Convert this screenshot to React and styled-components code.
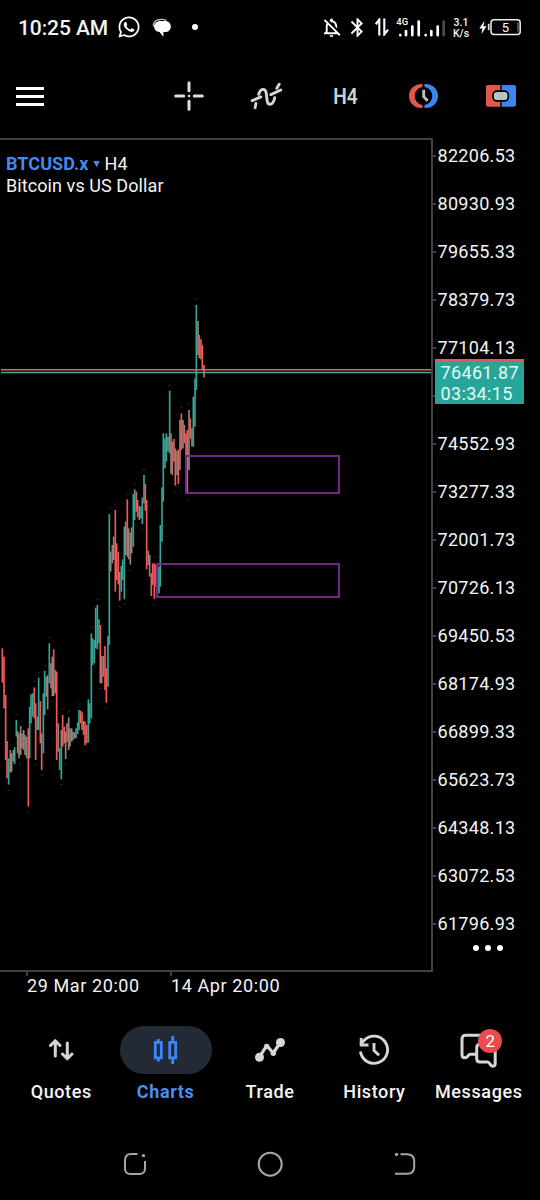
import React from "react";
import styled, { createGlobalStyle } from "styled-components";
import { FaWhatsapp } from "react-icons/fa";
import { MdOutlineNotificationsOff, MdBluetooth } from "react-icons/md";

const GlobalStyle = createGlobalStyle`
  * { box-sizing: border-box; }
  body { margin: 0; background: #000; }
`;

const Screen = styled.div`
  display: flex;
  flex-direction: column;
  width: 540px;
  height: 1200px;
  overflow: hidden;
  background: #000;
  color: #f4f4f4;
  font-family: Roboto, "Liberation Sans", sans-serif;
  svg { display: block; flex: none; }
`;

const StatusBar = styled.header`
  display: flex;
  align-items: center;
  height: 54px;
  padding: 0 18px 0 18px;
`;

const Clock = styled.span`
  width: 99px;
  padding-top: 1px;
  font-size: 21px;
  font-weight: 500;
  letter-spacing: -0.1px;
  white-space: nowrap;
`;

const StatusIcons = styled.div`
  display: flex;
  align-items: center;
  margin-left: auto;
`;

const NetSpeed = styled.div`
  width: 20px;
  margin: 1px 8px 0 5px;
  font-size: 10.5px;
  font-weight: 500;
  line-height: 11px;
  text-align: center;
`;

const Toolbar = styled.nav`
  display: flex;
  align-items: center;
  height: 84px;
  padding-left: 16px;
`;

const MenuButton = styled.div`
  display: flex;
  flex-direction: column;
  gap: 5px;
  width: 28px;
  margin-right: auto;
`;

const MenuLine = styled.span`
  height: 3px;
  background: #fff;
`;

const ToolButton = styled.div`
  display: flex;
  justify-content: center;
  width: 78px;
`;

const Timeframe = styled.span`
  color: #cfcfcf;
  font-size: 22.5px;
  font-weight: 600;
  line-height: 26px;
  transform: scaleX(0.85);
`;

const ChartArea = styled.main`
  position: relative;
  display: flex;
  height: 834px;
`;

const Plot = styled.section`
  width: 433px;
  height: 834px;
  border: solid #414146;
  border-width: 2px 2px 2px 0;
`;

const SymbolTitle = styled.div`
  position: absolute;
  left: 6px;
  top: 14.5px;
  font-size: 18px;
  line-height: 22px;
  letter-spacing: 0.08px;
  white-space: nowrap;
`;

const SymbolRow = styled.div`
  display: flex;
  align-items: center;
`;

const SymbolName = styled.strong`
  color: #4689ee;
  font-weight: 700;
`;

const PriceAxis = styled.aside`
  flex: 1;
  margin-top: -6.5px;
`;

const PriceLabel = styled.div`
  display: flex;
  align-items: center;
  height: 48px;
  gap: 1.5px;
  font-size: 18px;
  letter-spacing: 0.3px;
  &::before {
    content: "";
    width: 3px;
    height: 2px;
    background: #414146;
  }
`;

const PriceTag = styled.div`
  position: absolute;
  left: 435px;
  top: 221px;
  width: 89px;
  height: 45px;
  padding: 0 0 0 5.500px;
  border-top: 3px solid #e8555a;
  background: #26a69a;
  color: #e9f8f5;
  font-size: 18px;
  line-height: 21px;
  letter-spacing: 0.35px;
`;

const MoreButton = styled.div`
  display: flex;
  gap: 6px;
  margin: -2.500px 0 0 40px;
`;

const MoreDot = styled.i`
  width: 6px;
  height: 6px;
  border-radius: 50%;
  background: #fff;
`;

const TimeAxis = styled.div`
  display: flex;
  height: 48px;
  padding-left: 26px;
`;

const TimeLabel = styled.div`
  width: 144px;
  padding-left: 1px;
  font-size: 18px;
  letter-spacing: 0.6px;
  line-height: 20px;
  white-space: nowrap;
  &::before {
    content: "";
    display: block;
    width: 2px;
    height: 4px;
    margin-left: -1px;
    background: #414146;
  }
`;

const TabBar = styled.nav`
  display: grid;
  grid-template-columns: repeat(5, 1fr);
  height: 108px;
  padding: 6px 9px 0;
`;

const Tab = styled.div`
  display: flex;
  flex-direction: column;
  align-items: center;
  gap: 8px;
  color: ${(p) => (p.$active ? "#4a8ff0" : "#f5f5f5")};
  font-size: 18px;
  font-weight: ${(p) => (p.$active ? 700 : 500)};
  line-height: 20px;
  letter-spacing: 0.6px;
  white-space: nowrap;
`;

const TabPill = styled.div`
  position: relative;
  display: flex;
  align-items: center;
  justify-content: center;
  width: 92px;
  height: 48px;
  border-radius: 24px;
  background: ${(p) => (p.$active ? "#222a35" : "transparent")};
`;

const Badge = styled.span`
  position: absolute;
  left: 45.5px;
  top: 3px;
  width: 24px;
  height: 24px;
  border-radius: 50%;
  background: #eb4b4f;
  color: #fff;
  font-size: 17px;
  font-weight: 400;
  line-height: 24px;
  letter-spacing: 0;
  text-align: center;
`;

const SystemNav = styled.footer`
  display: flex;
  align-items: center;
  justify-content: center;
  gap: 108px;
  height: 72px;
`;

const TEAL = "#35a597";
const RED = "#ee5b58";
const MIXED = "#98827a";
const COLORS = { g: TEAL, r: RED, n: MIXED };

/* Bars are stored per swing as "color x high low", in thirds of a pixel. */
const SWINGS = [
  {
    dx: 0,
    dy: 1680,
    bars:
      "r 7 265 368,r 12 290 445,r 17 405 600,r 21 543 655,g 26 595 674,n 31 570 638,n 35 580 635,n 40 570 605,g 44 562 612,g 49 480 530,r 53 513 580,n 57 520 595,n 62 498 585,n 66 520 565,n 71 510 570,n 75 525 585,n 80 530 595,r 85 505 740,g 89 440 595,g 93 403 490,g 98 400 470,r 103 382 475,r 107 430 600,n 112 470 510,g 116 353 510,r 121 423 550,r 125 520 630,g 130 400 580,g 134 332 465,n 139 350 410,n 143 345 448,g 148 250 370,n 153 310 385,n 157 290 408,r 161 268 408,n 166 330 400,r 170 335 600,n 175 490 575,g 179 565 630,g 184 510 658,r 188 465 560,r 193 500 550,n 197 515 597,n 201 490 545,n 206 472 570,n 210 505 560,n 215 505 545,n 219 515 540,n 224 518 535,g 228 505 535,g 233 487 522,g 237 450 510,r 242 452 490,r 246 457 510,r 251 483 525,r 255 485 556,r 260 495 550,g 265 418 548,g 269 430 490,g 274 220 475,g 278 235 315,g 283 240 310,g 287 143 265,g 292 135 268,g 297 178 250,r 301 195 370,n 305 288 370,n 310 288 350,r 315 258 390,r 319 325 428,g 324 228 380",
    marks:
      "150 233,26 692,104 364,50 463,63 483,85 757,184 674,190 447,207 454,256 573,276 202,293 118,320 445,126 645,108 615,117 338,135 317,157 424,238 432,302 386,197 611,59 611",
  },
  {
    dx: 270,
    dy: 1320,
    bars:
      "g 58 222 615,n 62 335 395,n 67 315 370,n 71 290 360,r 76 210 455,r 80 310 420,r 85 335 433,r 89 395 482,g 94 378 455,g 98 358 420,g 103 260 478,n 107 245 345,r 112 178 350,n 116 265 358,n 121 278 374,n 125 262 340,g 130 162 320,g 134 148 240,r 139 155 215,r 143 180 232,r 148 198 240,g 153 200 235,g 157 173 252,g 162 105 190,r 166 132 212,r 170 180 388,n 175 332 375,n 179 345 410,r 184 400 468,r 188 370 435,r 193 370 477,r 198 375 440,n 202 372 455,g 207 380 460,g 211 255 440,g 216 142 305",
    marks:
      "162 90,135 130,112 162,76 192,58 203,89 500,103 492,157 268,193 494,121 391,32 745,193 352",
  },
  {
    dx: 420,
    dy: 870,
    bars:
      "g 70 430 635,g 75 445 535,g 79 430 515,n 84 440 485,g 89 302 490,n 93 430 550,n 97 455 555,r 102 447 515,r 106 475 587,n 111 483 555,r 115 478 582,n 120 390 540,r 124 370 480,n 129 390 475,r 133 405 460,r 138 430 500,r 142 420 608,n 147 360 540,r 151 385 445,n 156 415 470,g 160 320 470,g 165 265 410,g 169 45 300,n 174 93 195,r 178 135 205,r 183 148 208,r 187 165 240,r 192 225 262",
    marks: "169 28,88 286,124 352,147 343,106 604,143 630,12 539",
  },
];

const ZONES = [
  { x: 186, y: 456, w: 153, h: 37 },
  { x: 157, y: 564, w: 182, h: 33 },
];

/* The empty slot is the tick that sits behind the current price tag. */
const PRICES = [
  "82206.53", "80930.93", "79655.33", "78379.73", "77104.13", "",
  "74552.93", "73277.33", "72001.73", "70726.13", "69450.53", "68174.93",
  "66899.33", "65623.73", "64348.13", "63072.53", "61796.93",
];

function PriceChart() {
  return (
    <svg width="431" height="830" viewBox="0 140 431 830">
      <g transform="scale(0.33333)">
        {SWINGS.map((s) => (
          <g key={s.dx} transform={`translate(${s.dx} ${s.dy})`}>
            {s.bars.split(",").map((bar) => {
              const [c, x, top, bottom] = bar.split(" ");
              return (
                <rect key={x} x={x - 2.5} y={top} width="5" height={bottom - top} fill={COLORS[c]} />
              );
            })}
            {s.marks.split(",").map((m) => {
              const [x, y] = m.split(" ");
              return <rect key={m} x={x - 4} y={y - 1.5} width="8" height="3" fill="#2b2433" />;
            })}
          </g>
        ))}
      </g>
      {ZONES.map((z) => (
        <rect key={z.y} x={z.x} y={z.y} width={z.w} height={z.h} fill="none" stroke="#722784" strokeWidth="2" />
      ))}
      <path d="M1 369.7H431" stroke="#e8615f" strokeWidth="1.6" />
      <path d="M1 372.6H431" stroke="#43aa9d" strokeWidth="1.5" />
    </svg>
  );
}

function MessageBubble() {
  return (
    <svg width="20" height="20" viewBox="0 0 20 20">
      <path d="M1.600 8.500C.7 5 3.300 1.700 8 1.500c3-.2 5 .1 6.500 1.100" fill="none" stroke="#bbb" strokeWidth="1.300" />
      <path d="M8.500 3h4.300c3.400 0 6 2.200 6 5.500 0 3.400-2.300 5.600-5.700 5.600h-1.700V18.700L7.500 14.100C4.300 13.800 2.100 11.500 2.100 8.600 2.100 5.300 4.900 3 8.500 3Z" fill="#fff" />
    </svg>
  );
}

function DataArrows() {
  return (
    <svg width="14" height="18" viewBox="0 0 14 18" fill="none" stroke="#fff" strokeWidth="2.100">
      <path d="M4.300 17.500V1.500L.8 6.300M9.300.5v16L13 11.700" />
    </svg>
  );
}

function Signal() {
  return (
    <svg width="50" height="24" viewBox="394 14.500 50 24">
      <text x="394.300" y="24" fill="#fff" fontSize="9.500" fontWeight="500">4G</text>
      <g stroke="#fff" strokeWidth="2.700" strokeLinecap="round">
        <path d="M398.300 34.500v.2M404 30.500v4.200M410.300 26v8.700M416.700 21v13.700M423.700 34.500v.2M429.300 30.500v4.200M435.700 26v8.700" />
        <path d="M441.700 21v13.700" stroke="#4c4c4c" />
      </g>
    </svg>
  );
}

function Battery() {
  return (
    <svg width="43" height="18" viewBox="479 18 43 18">
      <path d="M484.500 20.800 479.300 28.500h3.200l-1.200 5.700 5.300-8h-3.200Z" fill="#fff" />
      <path d="M488.700 23.800v6.400" stroke="#ddd" strokeWidth="1.700" />
      <rect x="491" y="19.800" width="29.200" height="14.600" rx="3" fill="none" stroke="#eee" strokeWidth="1.500" />
      <path d="M518 22.500v9" stroke="#666" strokeWidth="1.500" />
      <text x="505.500" y="31.700" fill="#fff" fontSize="13" textAnchor="middle">5</text>
    </svg>
  );
}

function CrosshairIcon() {
  return (
    <svg width="30" height="30" viewBox="0 0 30 30" fill="none" stroke="#dedede" strokeWidth="3" strokeLinecap="round">
      <path d="M15 1.700v8M15 20.300v8M1.700 15h8M20.300 15h8" />
      <circle cx="15" cy="15" r="1.300" fill="#dedede" stroke="none" />
    </svg>
  );
}

function IndicatorIcon() {
  return (
    <svg width="34" height="30" viewBox="250 81 34 30" fill="none" stroke="#d6d6d6" strokeWidth="2.900" strokeLinecap="round" strokeLinejoin="round">
      <path d="M255.100 107.700l.8-4.200M258.700 94.300C259.700 91 261.300 89.400 263.300 89.400 268.700 89.400 264.800 104.300 269.800 104.300 272.300 104.300 274 101.300 274.700 97.700M276.800 88.300l2.400-4" />
      <path d="M252.200 100.600l8.600-3.700M270.800 94.600l10-4.600" />
    </svg>
  );
}

function SessionIcon() {
  return (
    <svg width="31" height="26" viewBox="0 0 31 26">
      <path d="M14.500 1H13A12 12 0 0 0 13 25h1.500v-2.900A9.200 9.200 0 0 1 14.500 3.900Z" fill="#e1574c" />
      <path d="M16.500 1H18A12 12 0 0 1 18 25h-1.500v-2.900A9.200 9.200 0 0 0 16.500 3.900Z" fill="#3b87f0" />
      <path d="M15.700 6.700v7l4 4" fill="none" stroke="#b9c3c9" strokeWidth="2.800" />
    </svg>
  );
}

function OneClickIcon() {
  return (
    <svg width="30" height="24" viewBox="0 0 30 24">
      <path d="M14.300 1H2a2 2 0 0 0-2 2v17.700a2 2 0 0 0 2 2h12.300Z" fill="#e1574c" />
      <path d="M15.700 1H28a2 2 0 0 1 2 2v17.700a2 2 0 0 1-2 2H15.700Z" fill="#3b87f0" />
      <rect x="7" y="7.200" width="15.300" height="9.700" rx="3.800" fill="#b7c7c8" stroke="#000" strokeWidth="1.700" />
    </svg>
  );
}

function QuotesIcon() {
  return (
    <svg width="26" height="24" viewBox="0 0 26 24" fill="none" stroke="#d4d4d4" strokeWidth="3" strokeLinecap="round" strokeLinejoin="round">
      <path d="M7.300 18V3M2.500 7.500 7.300 2.700 12 7.500M19.300 5v15.500M14.500 16l4.800 4.800L24 16" />
    </svg>
  );
}

function ChartsIcon() {
  return (
    <svg width="26" height="30" viewBox="0 0 26 30" fill="none" stroke="#3f86f4" strokeWidth="2.800">
      <path d="M2.300 7.300h6v15.500h-6zM16.700 7.300h6v15.500h-6zM5.300 4v3.500M5.300 22.500v4M19.700 1v6.500M19.700 22.500V29" />
    </svg>
  );
}

function TradeIcon() {
  return (
    <svg width="34" height="30" viewBox="253 1035 34 30" fill="none" stroke="#d6d6d6" strokeWidth="3.200" strokeLinejoin="round">
      <path d="M259.300 1057.300 266.700 1045.500 273.300 1053 280.300 1042.500" />
      <circle cx="259.500" cy="1057.300" r="4.500" fill="#d6d6d6" stroke="none" />
      <circle cx="280.500" cy="1042.500" r="4.500" fill="#d6d6d6" stroke="none" />
      <circle cx="266.700" cy="1046.500" r="2.700" fill="#d6d6d6" stroke="none" />
      <circle cx="273.300" cy="1053.200" r="2.700" fill="#d6d6d6" stroke="none" />
    </svg>
  );
}

function HistoryIcon() {
  return (
    <svg width="32" height="32" viewBox="358 1034 32 32" fill="none" stroke="#d6d6d6" strokeWidth="2.900">
      <path d="M360.500 1051.500A13.600 13.600 0 1 0 364 1040.500L360.500 1044.500" />
      <path d="M361.200 1038v7h7.300" />
      <path d="M374 1043v7.500l5 4.800" />
    </svg>
  );
}

function MessagesIcon() {
  return (
    <svg width="38" height="36" viewBox="460 1032 38 36" fill="none" stroke="#d6d6d6" strokeWidth="3" strokeLinejoin="round">
      <path d="M476 1054.300h-6c-1.500 0-2.500 3.500-5 3.500-2 0-3-1.200-3-3v-16c0-2 1.500-3.500 3.500-3.500h22" />
      <path d="M495.200 1048v15.500c0 3-3 3.500-4.500 1.500-1.200-1.700-1.700-3-3.200-3h-7.500c-2 0-3.300-1.300-3.300-3.300v-11c0-2 1.300-3.700 3.500-3.700" />
    </svg>
  );
}

function SystemIcon({ children }) {
  return (
    <svg width="27" height="27" viewBox="0 0 27 27" fill="none" stroke="#a5a5a5" strokeWidth="2">
      {children}
    </svg>
  );
}

const TABS = [
  { label: "Quotes", Icon: QuotesIcon },
  { label: "Charts", Icon: ChartsIcon, active: true },
  { label: "Trade", Icon: TradeIcon },
  { label: "History", Icon: HistoryIcon },
  { label: "Messages", Icon: MessagesIcon, badge: 2 },
];

const BubbleSlot = styled.div`
  margin: 1px 20px 0 11px;
`;

const NotificationDot = styled.i`
  width: 6px;
  height: 6px;
  border-radius: 50%;
  background: #fff;
`;

const IconSlot = styled.div`
  margin-right: ${(p) => p.$gap}px;
`;

export default function App() {
  return (
    <Screen>
      <GlobalStyle />
      <StatusBar>
        <Clock>10:25 AM</Clock>
        <FaWhatsapp size={24} color="#fff" />
        <BubbleSlot><MessageBubble /></BubbleSlot>
        <NotificationDot />
        <StatusIcons>
          <IconSlot $gap={3}><MdOutlineNotificationsOff size={23} color="#fff" /></IconSlot>
          <IconSlot $gap={6}><MdBluetooth size={23} color="#fff" /></IconSlot>
          <IconSlot $gap={7}><DataArrows /></IconSlot>
          <Signal />
          <NetSpeed>3.1<br />K/s</NetSpeed>
          <Battery />
        </StatusIcons>
      </StatusBar>

      <Toolbar>
        <MenuButton><MenuLine /><MenuLine /><MenuLine /></MenuButton>
        <ToolButton><CrosshairIcon /></ToolButton>
        <ToolButton><IndicatorIcon /></ToolButton>
        <ToolButton><Timeframe>H4</Timeframe></ToolButton>
        <ToolButton><SessionIcon /></ToolButton>
        <ToolButton><OneClickIcon /></ToolButton>
      </Toolbar>

      <ChartArea>
        <Plot><PriceChart /></Plot>
        <SymbolTitle>
          <SymbolRow>
            <SymbolName>BTCUSD.x</SymbolName>
            <svg width="16" height="8" viewBox="0 0 16 8"><path d="M4.300 1h6.500L7.600 7.300Z" fill="#4689ee" /></svg>
            <span>H4</span>
          </SymbolRow>
          <div>Bitcoin vs US Dollar</div>
        </SymbolTitle>
        <PriceAxis>
          {PRICES.map((p, i) => <PriceLabel key={i}>{p}</PriceLabel>)}
          <MoreButton><MoreDot /><MoreDot /><MoreDot /></MoreButton>
        </PriceAxis>
        <PriceTag>76461.87<br />03:34:15</PriceTag>
      </ChartArea>

      <TimeAxis>
        <TimeLabel>29 Mar 20:00</TimeLabel>
        <TimeLabel>14 Apr 20:00</TimeLabel>
      </TimeAxis>

      <TabBar>
        {TABS.map(({ label, Icon, active, badge }) => (
          <Tab key={label} $active={active}>
            <TabPill $active={active}>
              <Icon />
              {badge && <Badge>{badge}</Badge>}
            </TabPill>
            {label}
          </Tab>
        ))}
      </TabBar>

      <SystemNav>
        <SystemIcon>
          <path d="M15.500 3H9C5 3 3 5.500 3 9.500V17.500c0 3.500 2 5.500 5.500 5.500H17.500c3.500 0 5.500-2 5.500-5.500v-7.500" />
          <circle cx="21.500" cy="4.600" r="1.700" fill="#a5a5a5" stroke="none" />
        </SystemIcon>
        <SystemIcon><circle cx="13.200" cy="13.200" r="11.500" /></SystemIcon>
        <SystemIcon>
          <path d="M8.500 3.200H15c5 0 7.200 2.500 7.200 7V15.700c0 5-2.500 7-7 7H3" />
          <circle cx="4.500" cy="3.400" r="1.700" fill="#a5a5a5" stroke="none" />
        </SystemIcon>
      </SystemNav>
    </Screen>
  );
}
